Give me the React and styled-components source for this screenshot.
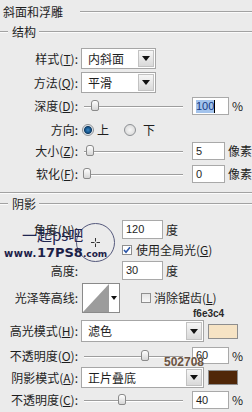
import styled, { createGlobalStyle } from 'styled-components';

const GlobalStyle = createGlobalStyle`
  html, body {
    margin: 0;
    padding: 0;
    background: #ebebeb;
  }
  body {
    font-family: "Noto Sans CJK SC", "Liberation Sans", sans-serif;
    font-size: 12px;
    color: #1e1e1e;
  }
`;

const Page = styled.div`
  position: relative;
  width: 252px;
  height: 412px;
  overflow: hidden;
  background: #ebebeb;
  line-height: 1;
`;

// 헤더 / 그룹 제목
const Header = styled.div`
  display: flex;
  align-items: center;
  height: 24px;
  padding-left: 3px;
`;

const Rule = styled.div`
  flex: ${p => (p.$w ? `0 0 ${p.$w}px` : 1)};
  margin-left: ${p => p.$ml || 0}px;
  height: 0;
  border-top: 1px solid #a2a2a2;
  border-bottom: 1px solid #fbfbfb;
`;

const GroupTitle = styled.div`
  display: flex;
  align-items: center;
  height: 16px;
  margin-top: ${p => p.$mt || 0}px;
`;

const GroupText = styled.span`
  margin: 0 3px 0 4px;
`;

const Separator = styled.div`
  margin-top: 9px;
  height: 0;
  border-top: 1px solid #a2a2a2;
  border-bottom: 1px solid #fbfbfb;
`;

// 행
const Row = styled.div`
  display: flex;
  align-items: center;
  height: ${p => p.$h}px;
  margin-top: ${p => p.$mt || 0}px;
  white-space: nowrap;
`;

const Label = styled.span`
  flex: 0 0 78px;
  text-align: right;
`;

const Select = styled.div`
  display: flex;
  box-sizing: border-box;
  width: ${p => p.$w}px;
  height: 100%;
  margin-left: 3px;
  background: #fff;
  border: 1px solid #a6a6a6;
`;

const SelectValue = styled.span`
  flex: 1;
  display: flex;
  align-items: center;
  padding-left: 6px;
`;

const SelectArrow = styled.span`
  width: 14px;
  margin: 1px;
  border: 1px solid #c2c2c2;
  background: linear-gradient(#f6f6f6, #d9d9d9);
  display: flex;
  align-items: center;
  justify-content: center;
  &::after {
    content: '';
    border-left: 4px solid transparent;
    border-right: 4px solid transparent;
    border-top: 5px solid #111;
  }
`;

const Slider = styled.div`
  position: relative;
  flex: 0 0 103px;
  height: 100%;
  margin-left: 3px;
  &::before {
    content: '';
    position: absolute;
    left: 3px;
    right: 1px;
    top: 50%;
    height: 1px;
    background: #9d9d9d;
    border-bottom: 1px solid #fff;
  }
`;

const Thumb = styled.span`
  position: absolute;
  top: 50%;
  left: ${p => p.$c - 81 - 4}px;
  width: 8px;
  height: 11px;
  margin-top: -6px;
  box-sizing: border-box;
  border: 1px solid #8a8a8a;
  border-radius: 3px 3px 2px 2px;
  background: linear-gradient(#ffffff, #d6d6d6);
`;

const Field = styled.div`
  display: flex;
  align-items: center;
  box-sizing: border-box;
  width: ${p => p.$w || 37}px;
  height: 100%;
  margin-left: ${p => p.$ml || 0}px;
  padding-left: 3px;
  background: #fff;
  border: 1px solid #a9a9a9;
  font-family: "Liberation Sans", Arial, sans-serif;
  font-size: 11px;
`;

const Selected = styled.span`
  background: #a3c3ec;
  color: #173a86;
  padding: 1px 0;
  border-right: 1px solid #000;
`;

const Unit = styled.span`
  margin-left: 3px;
`;

const Radio = styled.span`
  flex: 0 0 12px;
  height: 12px;
  box-sizing: border-box;
  border-radius: 50%;
  border: 1px solid #8d9094;
  margin-left: ${p => p.$ml || 0}px;
  background: ${p =>
    p.$on
      ? 'radial-gradient(circle, #3a86c4 0, #0f4c80 3px, #1a3f63 3.6px, #dbe3ea 4.4px, #f4f4f4 6px)'
      : 'radial-gradient(circle, #f6f6f6 0, #d8d8d8 6px)'};
`;

const Text = styled.span`
  margin-left: ${p => p.$ml || 0}px;
`;

const Check = styled.span`
  display: flex;
  align-items: center;
  justify-content: center;
  flex: 0 0 10px;
  height: 10px;
  box-sizing: border-box;
  margin-left: ${p => p.$ml || 0}px;
  border: 1px solid #8f8f8f;
  background: ${p => (p.$on ? '#fff' : 'linear-gradient(#e4e4e4, #f8f8f8)')};
`;

// 각도 영역
const AngleGrid = styled.div`
  display: grid;
  grid-template-columns: 78px 44px auto;
  grid-template-rows: 19px 16px 19px;
  row-gap: 3px;
  margin-top: 8px;
  white-space: nowrap;
`;

const Cell = styled.div`
  display: flex;
  align-items: center;
  justify-content: ${p => (p.$right ? 'flex-end' : 'flex-start')};
  grid-column: ${p => p.$col};
  grid-row: ${p => p.$row};
  height: 100%;
`;

const Dial = styled.div`
  grid-column: 2;
  grid-row: 1 / 3;
  align-self: start;
  width: 39px;
  height: 39px;
  margin: 3px 0 0 -2px;
  box-sizing: border-box;
  border-radius: 50%;
  border: 1.5px solid #55597c;
  display: flex;
  align-items: center;
  justify-content: center;
`;

const Contour = styled.div`
  display: flex;
  box-sizing: border-box;
  width: 38px;
  height: 100%;
  margin-left: 4px;
  border: 1px solid #8a8a8a;
  background: #fff;
`;

const ContourArrow = styled.span`
  flex: 1;
  display: flex;
  align-items: center;
  justify-content: center;
  &::after {
    content: '';
    border-left: 3px solid transparent;
    border-right: 3px solid transparent;
    border-top: 4px solid #111;
  }
`;

const Swatch = styled.span`
  flex: 0 0 30px;
  height: 15px;
  margin-left: 4px;
  box-sizing: border-box;
  border: 1px solid #8e8e8e;
  background: ${p => p.$color};
`;

// 워터마크 / 색상 주석
const Mark = styled.div`
  position: absolute;
  left: ${p => p.$x}px;
  top: ${p => p.$y}px;
  color: ${p => p.$color};
  font-family: ${p => p.$font || '"Liberation Sans", Arial, sans-serif'};
  font-size: ${p => p.$size}px;
  font-weight: ${p => p.$weight || 400};
  line-height: 1;
  white-space: nowrap;
  pointer-events: none;
`;

const Small = styled.span`
  font-size: ${p => p.$size}px;
  letter-spacing: ${p => p.$ls || 0}px;
`;

const U = styled.u`
  text-underline-offset: 1px;
`;

function CheckMark() {
  return (
    <svg width="8" height="8" viewBox="0 0 8 8">
      <path d="M1 4 L3 6.3 L7 1.2" fill="none" stroke="#2a55a8" strokeWidth="1.6" />
    </svg>
  );
}

export default function App() {
  return (
    <Page>
      <GlobalStyle />
      <Header>
        <span>斜面和浮雕</span>
        <Rule $ml={17} />
      </Header>
      <GroupTitle>
        <Rule $w={8} />
        <GroupText>结构</GroupText>
        <Rule />
      </GroupTitle>

      <Row $h={21} $mt={8}>
        <Label>样式(<U>T</U>):</Label>
        <Select $w={75}>
          <SelectValue>内斜面</SelectValue>
          <SelectArrow />
        </Select>
      </Row>
      <Row $h={21} $mt={3}>
        <Label>方法(<U>Q</U>):</Label>
        <Select $w={75}>
          <SelectValue>平滑</SelectValue>
          <SelectArrow />
        </Select>
      </Row>
      <Row $h={18} $mt={4}>
        <Label>深度(<U>D</U>):</Label>
        <Slider><Thumb $c={95} /></Slider>
        <Field $ml={8}><Selected>100</Selected></Field>
        <Unit>%</Unit>
      </Row>
      <Row $h={18} $mt={6}>
        <Label>方向:</Label>
        <Radio $on $ml={4} />
        <Text $ml={3}>上</Text>
        <Radio $ml={15} />
        <Text $ml={7}>下</Text>
      </Row>
      <Row $h={18} $mt={3}>
        <Label>大小(<U>Z</U>):</Label>
        <Slider><Thumb $c={90} /></Slider>
        <Field $ml={8}>5</Field>
        <Unit>像素</Unit>
      </Row>
      <Row $h={18} $mt={5}>
        <Label>软化(<U>F</U>):</Label>
        <Slider><Thumb $c={87} /></Slider>
        <Field $ml={8}>0</Field>
        <Unit>像素</Unit>
      </Row>

      <Separator />
      <GroupTitle $mt={2}>
        <Rule $w={8} />
        <GroupText>阴影</GroupText>
        <Rule />
      </GroupTitle>

      <AngleGrid>
        <Cell $col={1} $row={1} $right>角度(<U>N</U>):</Cell>
        <Dial>
          <svg width="9" height="9" viewBox="0 0 9 9">
            <path d="M4.5 0 V3.5 M4.5 5.5 V9 M0 4.5 H3.5 M5.5 4.5 H9" stroke="#333" strokeWidth="1" />
          </svg>
        </Dial>
        <Cell $col={3} $row={1}>
          <Field $w={41}>120</Field>
          <Unit>度</Unit>
        </Cell>
        <Cell $col={3} $row={2}>
          <Check $on><CheckMark /></Check>
          <Text $ml={4}>使用全局光(<U>G</U>)</Text>
        </Cell>
        <Cell $col={1} $row={3} $right>高度:</Cell>
        <Cell $col={3} $row={3}>
          <Field $w={41}>30</Field>
          <Unit>度</Unit>
        </Cell>
      </AngleGrid>

      <Row $h={30} $mt={3}>
        <Label>光泽等高线:</Label>
        <Contour>
          <svg width="26" height="28" viewBox="0 0 26 28">
            <polygon points="26,0 26,28 0,28" fill="#9c9c9c" />
          </svg>
          <ContourArrow />
        </Contour>
        <Check $ml={21} />
        <Text $ml={3}>消除锯齿(<U>L</U>)</Text>
      </Row>

      <Row $h={22} $mt={7}>
        <Label>高光模式(<U>H</U>):</Label>
        <Select $w={123}>
          <SelectValue>滤色</SelectValue>
          <SelectArrow />
        </Select>
        <Swatch $color="#f6e3c4" />
      </Row>
      <Row $h={17} $mt={5}>
        <Label>不透明度(<U>O</U>):</Label>
        <Slider><Thumb $c={145} /></Slider>
        <Field $ml={8}>60</Field>
        <Unit>%</Unit>
      </Row>
      <Row $h={21} $mt={3}>
        <Label>阴影模式(<U>A</U>):</Label>
        <Select $w={123}>
          <SelectValue>正片叠底</SelectValue>
          <SelectArrow />
        </Select>
        <Swatch $color="#502708" />
      </Row>
      <Row $h={18} $mt={3}>
        <Label>不透明度(<U>C</U>):</Label>
        <Slider><Thumb $c={122} /></Slider>
        <Field $ml={8}>40</Field>
        <Unit>%</Unit>
      </Row>

      <Mark $x={22} $y={227} $size={15} $color="#1f2550" $font='"Noto Sans CJK SC", sans-serif'>
        一起ps吧
      </Mark>
      <Mark $x={4} $y={246} $size={13} $weight={700} $color="#1c2148" $font='"DejaVu Sans", sans-serif'>
        <Small $size={10} $ls={0.5}>www.</Small>17PS8<Small $size={9}>.com</Small>
      </Mark>
      <Mark $x={193} $y={309} $size={10} $weight={700} $color="#2a2a2a">
        f6e3c4
      </Mark>
      <Mark $x={164} $y={356} $size={12} $weight={700} $color="#6b5443">
        502708
      </Mark>
    </Page>
  );
}
